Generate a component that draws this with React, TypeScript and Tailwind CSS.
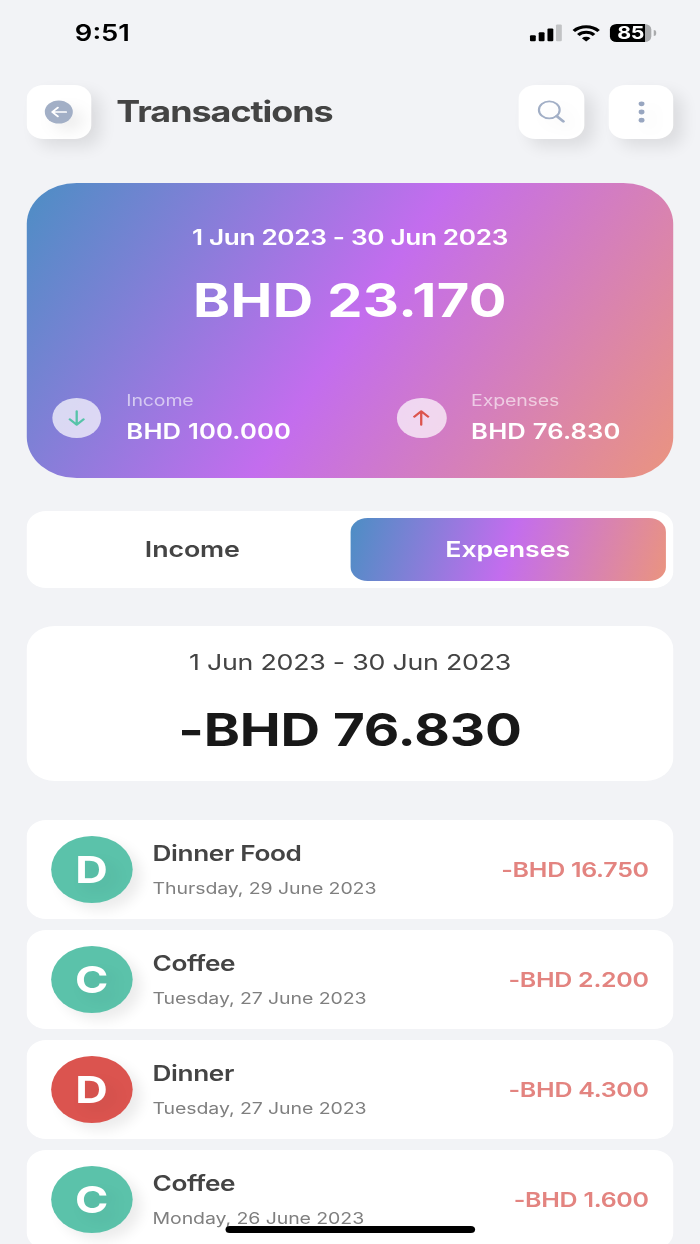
import type { ReactNode } from "react";

const period = "1 Jun 2023 - 30 Jun 2023";

const transactions = [
  {
    name: "Dinner Food",
    date: "Thursday, 29 June 2023",
    amount: "-BHD 16.750",
    color: "bg-[#5bc2aa]",
  },
  {
    name: "Coffee",
    date: "Tuesday, 27 June 2023",
    amount: "-BHD 2.200",
    color: "bg-[#5bc2aa]",
  },
  {
    name: "Dinner",
    date: "Tuesday, 27 June 2023",
    amount: "-BHD 4.300",
    color: "bg-[#db544f]",
  },
  {
    name: "Coffee",
    date: "Monday, 26 June 2023",
    amount: "-BHD 1.600",
    color: "bg-[#5bc2aa]",
  },
];

function StatusBar() {
  return (
    <div className="flex h-[66px] shrink-0 items-center justify-between pr-[36.4px] pl-[61.5px]">
      <span className="text-[22.5px] leading-none font-semibold text-black">
        9:51
      </span>

      <div className="flex items-center">
        <svg width="27" height="18" viewBox="0 0 27 18" fill="#000">
          <rect x="0.3" y="11.2" width="4.8" height="6" rx="1" />
          <rect x="7.5" y="8.2" width="4.8" height="9" rx="1" />
          <rect x="14.7" y="4.4" width="4.8" height="12.8" rx="1" />
          <rect x="21.7" y="0.4" width="4.8" height="16.8" rx="1" fill="#c2c3c5" />
        </svg>

        <svg
          className="ml-[8px]"
          width="23"
          height="17"
          viewBox="0 0 23 17"
          fill="none"
          stroke="#000"
          strokeWidth="2.9"
        >
          <path d="M1.3 6 A14.4 14.4 0 0 1 21.7 6" />
          <path d="M5 10 A9.2 9.2 0 0 1 18 10" />
          <path
            d="M8 13.2 A5 5 0 0 1 15 13.2 L11.5 16.6 Z"
            fill="#000"
            stroke="none"
          />
        </svg>

        <div className="ml-[8px] flex h-[18.5px] w-[34px] items-center justify-center overflow-hidden rounded-[5.5px] bg-[linear-gradient(to_right,#000_85%,#a9aaac_85%)]">
          <span className="text-[17.5px] leading-none font-bold tracking-[-0.2px] text-white">
            85
          </span>
        </div>
        <div className="ml-[1.5px] h-[6px] w-[2px] rounded-r-full bg-[#a9aaac]" />
      </div>
    </div>
  );
}

function IconButton({ label, children }: { label: string; children: ReactNode }) {
  return (
    <button
      aria-label={label}
      className="flex h-[54px] w-[53.7px] items-center justify-center rounded-[14px] bg-white shadow-[8px_8px_14px_rgba(0,0,0,0.09)]"
    >
      {children}
    </button>
  );
}

function Header() {
  return (
    <header className="mt-[19px] flex h-[54px] shrink-0 items-center">
      <IconButton label="Back">
        <svg
          className="drop-shadow-[8px_8px_7px_rgba(0,0,0,0.07)]"
          width="24"
          height="24"
          viewBox="0 0 24 24"
          fill="none"
        >
          <circle cx="12.3" cy="12" r="11.5" fill="#a2afc6" />
          <path
            d="M18.3 12H7.1M11.5 7.6L6.9 12L11.5 16.4"
            stroke="#fff"
            strokeWidth="1.7"
            strokeLinecap="round"
            strokeLinejoin="round"
          />
        </svg>
      </IconButton>

      <h1 className="ml-[20.3px] flex-1 text-[29.5px] leading-none font-bold tracking-[-0.85px] text-[#444]">
        Transactions
      </h1>

      <div className="flex gap-5">
        <IconButton label="Search">
          <svg
            className="drop-shadow-[7px_7px_6px_rgba(0,0,0,0.06)]"
            width="24"
            height="24"
            viewBox="0 0 24 24"
            fill="none"
            stroke="#a2afc6"
            strokeLinecap="round"
          >
            <circle cx="10.2" cy="9.9" r="8.5" strokeWidth="1.8" />
            <path d="M16.3 16.1L21.7 21.4" strokeWidth="2.5" />
          </svg>
        </IconButton>
        <IconButton label="More">
          <svg
            className="drop-shadow-[7px_7px_6px_rgba(0,0,0,0.06)]"
            width="24"
            height="24"
            viewBox="0 0 24 24"
            fill="#98a6c0"
          >
            <circle cx="12" cy="3.8" r="2.4" />
            <circle cx="12" cy="12" r="2.4" />
            <circle cx="12" cy="20.2" r="2.4" />
          </svg>
        </IconButton>
      </div>
    </header>
  );
}

function Flow({
  label,
  amount,
  children,
}: {
  label: string;
  amount: string;
  children: ReactNode;
}) {
  return (
    <div className="flex w-[283.2px] shrink-0 items-center">
      <div className="mt-[1.5px] flex h-10 w-[40.3px] items-center justify-center rounded-full bg-white/70">
        {children}
      </div>
      <div className="ml-[20.4px]">
        <div className="text-[16px] leading-[17px] tracking-[-0.1px] text-white/60">
          {label}
        </div>
        <div className="mt-3 text-[21px] leading-[22px] font-semibold tracking-[0.15px] text-white">
          {amount}
        </div>
      </div>
    </div>
  );
}

function BalanceCard() {
  return (
    <section className="mt-[44px] h-[295px] shrink-0 overflow-hidden rounded-[41px] bg-[linear-gradient(119deg,#4c8ec4_0%,#c36dee_50%,#ea947f_100%)] pt-[43px]">
      <div className="text-center text-[21.5px] leading-[22px] font-semibold tracking-[-0.28px] text-white">
        {period}
      </div>
      <div className="mt-[29px] text-center text-[46px] leading-[46px] font-bold tracking-[0.33px] text-white">
        BHD 23.170
      </div>
      <div className="mt-[68.5px] flex pl-[21.5px]">
        <Flow label="Income" amount="BHD 100.000">
          <svg width="16" height="16" viewBox="0 0 16 16" fill="none" stroke="#56c3a8" strokeWidth="1.9" strokeLinecap="round" strokeLinejoin="round">
            <path d="M8 1.2V14.6M2.3 9.3L8 14.8L13.7 9.3" />
          </svg>
        </Flow>
        <Flow label="Expenses" amount="BHD 76.830">
          <svg width="16" height="16" viewBox="0 0 16 16" fill="none" stroke="#dc544e" strokeWidth="1.9" strokeLinecap="round" strokeLinejoin="round">
            <path d="M8 14.8V1.4M2.3 6.7L8 1.2L13.7 6.7" />
          </svg>
        </Flow>
      </div>
    </section>
  );
}

function Tabs() {
  return (
    <div className="mt-[33px] flex h-[76.5px] shrink-0 rounded-[16px] bg-white px-[6.9px] py-[6.5px]">
      <button className="flex-1 text-[22px] leading-[24px] font-semibold tracking-[-0.1px] text-[#444]">
        Income
      </button>
      <button className="flex-1 rounded-[14px] bg-[linear-gradient(104deg,#4c8ec4_0%,#c36dee_50%,#ea947f_100%)] text-[22px] leading-[24px] font-semibold tracking-[-0.1px] text-white">
        Expenses
      </button>
    </div>
  );
}

function TotalCard() {
  return (
    <section className="mt-[38.5px] h-[155px] shrink-0 rounded-[23px] bg-white pt-[25px] text-center">
      <div className="text-[22px] leading-[22px] tracking-[-0.2px] text-[#444]">
        {period}
      </div>
      <div className="mt-[33.5px] text-[45px] leading-[45px] font-bold tracking-[-0.1px] text-[#181818]">
        -BHD 76.830
      </div>
    </section>
  );
}

function TransactionList() {
  return (
    <ul className="mt-[38.5px] flex flex-col gap-[11px]">
      {transactions.map((item, index) => (
        <li
          key={index}
          className="flex h-[99px] shrink-0 items-center rounded-[16px] bg-white pr-[20.5px] pl-[20.2px]"
        >
          <div
            className={`flex h-[67px] w-[67px] items-center justify-center rounded-full shadow-[7px_7px_12px_rgba(0,0,0,0.08)] ${item.color}`}
          >
            <span className="text-[37px] leading-[39px] font-bold text-white drop-shadow-[7px_7px_6px_rgba(0,0,0,0.06)]">
              {item.name[0]}
            </span>
          </div>
          <div className="ml-[16.5px] flex-1">
            <div className="text-[21.5px] leading-[22px] font-semibold tracking-[-0.3px] text-[#444]">
              {item.name}
            </div>
            <div className="mt-4 text-[16px] leading-[17px] tracking-[-0.06px] text-[#7f7f7f]">
              {item.date}
            </div>
          </div>
          <div className="mt-[2px] text-[20.5px] leading-none font-semibold tracking-[-0.22px] text-[#e38480]">
            {item.amount}
          </div>
        </li>
      ))}
    </ul>
  );
}

export default function App() {
  return (
    <div className="h-[1244px] w-[700px] overflow-hidden bg-[#f2f3f6]">
      {/* the 575px screen is stretched sideways to fill the 700px viewport */}
      <main className="relative flex h-[1244px] w-[575px] origin-top-left scale-x-[1.2174] flex-col overflow-hidden bg-[#f2f3f6] font-['Inter','Liberation_Sans',sans-serif]">
        <StatusBar />
        <div className="flex flex-col px-[21.6px]">
          <Header />
          <BalanceCard />
          <Tabs />
          <TotalCard />
          <TransactionList />
        </div>
        <div className="absolute bottom-[11.5px] left-1/2 h-[6.5px] w-[205.5px] -translate-x-1/2 rounded-full bg-black" />
      </main>
    </div>
  );
}
